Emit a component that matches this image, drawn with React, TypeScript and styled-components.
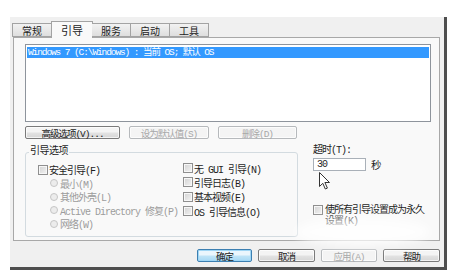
import styled, { createGlobalStyle } from "styled-components";

const GlobalStyle = createGlobalStyle`
  *, *::before, *::after { box-sizing: border-box; }
  html, body { margin: 0; padding: 0; background: #fff; }
  body {
    font-family: "Liberation Mono", "Noto Sans CJK SC", monospace;
    font-size: 10px;
    letter-spacing: -1px;
    color: #1e1e1e;
  }
`;

const Page = styled.div`
  width: 450px;
  height: 277px;
  padding: 17px 0 0 10px;
  overflow: hidden;
`;

const Window = styled.div`
  position: relative;
  width: 437px;
  height: 253px;
  display: flex;
  flex-direction: column;
  padding: 4px 4px 5px 3px;
  background: #f0f0f0;
  border-right: 3px solid #4e4e4e;
  border-bottom: 3px solid #4e4e4e;
`;

const TabRow = styled.div`
  display: flex;
  align-items: flex-end;
  height: 16px;
  margin-left: -1px;
  position: relative;
  z-index: 1;
`;

const Tab = styled.div<{ $active?: boolean }>`
  height: ${(p) => (p.$active ? "17px" : "14px")};
  padding: 0 9px;
  margin: ${(p) => (p.$active ? "0 -1px -1px" : "0")};
  display: flex;
  align-items: center;
  justify-content: center;
  border: 1px solid #a3a3a3;
  border-bottom: ${(p) => (p.$active ? "none" : "1px solid #a3a3a3")};
  border-left-width: ${(p) => (p.$active ? "1px" : "0")};
  background: ${(p) =>
    p.$active ? "#f9f9f9" : "linear-gradient(#f2f2f2, #dedede)"};
  font-size: ${(p) => (p.$active ? "11px" : "10px")};
  letter-spacing: 0;
  color: #222;
  &:first-child { border-left-width: 1px; }
`;

const Panel = styled.div`
  height: 204px;
  display: flex;
  flex-direction: column;
  padding: 6px 8px 0 11px;
  background: #f9f9f9;
  border: 1px solid #a8a8a8;
`;

const ListBox = styled.div`
  height: 78px;
  padding: 2px 1px;
  background: #fff;
  border: 1px solid #8e949c;
`;

const SelectedRow = styled.div`
  height: 11px;
  line-height: 11px;
  padding-left: 1px;
  background: #3399ff;
  color: #fff;
  font-size: 9.5px;
  letter-spacing: -1.1px;
  white-space: nowrap;
`;

const ButtonRow = styled.div<{ $end?: boolean }>`
  display: flex;
  gap: ${(p) => (p.$end ? "6px" : "9px")};
  justify-content: ${(p) => (p.$end ? "flex-end" : "flex-start")};
  margin-top: ${(p) => (p.$end ? "8px" : "4px")};
`;

const Button = styled.div<{ $w: number; $disabled?: boolean; $default?: boolean }>`
  width: ${(p) => p.$w}px;
  height: 13px;
  display: flex;
  align-items: center;
  justify-content: center;
  border-radius: 2px;
  font-size: 9.5px;
  white-space: nowrap;
  color: ${(p) => (p.$disabled ? "#a8a8a8" : "#222")};
  border: 1px solid
    ${(p) => (p.$default ? "#3c7fb1" : p.$disabled ? "#b6b9bc" : "#7a7a7a")};
  background: ${(p) =>
    p.$default
      ? "linear-gradient(#eaf6fd 45%, #bfe4f7 55%, #a7d9f5)"
      : p.$disabled
      ? "#f4f4f4"
      : "linear-gradient(#f4f4f4 45%, #e2e2e2 55%, #d6d6d6)"};
  box-shadow: inset 0 0 0 1px
    ${(p) => (p.$default ? "#9fd6f5" : "rgba(255,255,255,0.7)")};
`;

const Lower = styled.div`
  display: flex;
  margin-top: 7px;
`;

const Group = styled.fieldset`
  width: 273px;
  height: 91px;
  margin: 0;
  padding: 0;
  border: 1px solid #d3dbe0;
  border-radius: 3px;
  display: flex;
`;

const Legend = styled.legend`
  margin-left: 3px;
  padding: 0 1px;
  line-height: 12px;
  font-size: 10px;
  letter-spacing: -0.5px;
`;

const Column = styled.div<{ $w?: number; $top: number; $row: number }>`
  width: ${(p) => (p.$w ? `${p.$w}px` : "auto")};
  margin-left: ${(p) => (p.$w ? "12px" : "0")};
  padding-top: ${(p) => p.$top}px;
  display: flex;
  flex-direction: column;
  & > * { height: ${(p) => p.$row}px; }
`;

const Option = styled.div<{ $indent?: boolean; $disabled?: boolean }>`
  display: flex;
  align-items: center;
  margin-left: ${(p) => (p.$indent ? "12px" : "0")};
  color: ${(p) => (p.$disabled ? "#9c9c9c" : "#1e1e1e")};
  white-space: nowrap;
`;

const Check = styled.span`
  width: 10px;
  height: 10px;
  flex: none;
  margin-right: 1px;
  border: 1px solid #8f8f8f;
  background: linear-gradient(135deg, #d2d2d2, #f4f4f4);
  box-shadow: inset 0 0 0 1px #f7f7f7;
`;

const Radio = styled.span`
  width: 8px;
  height: 8px;
  flex: none;
  margin-right: 2px;
  border-radius: 50%;
  border: 1px solid #c6c6c6;
  background: #ececec;
`;

const Timeout = styled.div`
  position: relative;
  flex: 1;
  margin-left: 15px;
  margin-top: -1px;
  display: flex;
  flex-direction: column;
`;

const Label = styled.div`
  line-height: 12px;
`;

const InputRow = styled.div`
  display: flex;
  align-items: center;
`;

const Input = styled.div`
  width: 53px;
  height: 13px;
  padding-left: 3px;
  line-height: 11px;
  background: #fff;
  border: 1px solid #a9b0b8;
`;

const Unit = styled.span`
  margin-left: 5px;
  font-size: 10.5px;
`;

const Permanent = styled.div`
  display: flex;
  align-items: flex-start;
  margin-top: 33px;
`;

const PermText = styled.div`
  width: 106px;
  line-height: 11px;
  margin-left: 1px;
`;

const Cursor = styled.svg`
  position: absolute;
  left: 6px;
  top: 27px;
`;

const Smudge = styled.div`
  position: absolute;
  left: 285px;
  top: 200px;
  width: 135px;
  height: 30px;
  border-radius: 50%;
  background: rgba(255, 255, 255, 0.75);
  filter: blur(5px);
  pointer-events: none;
`;

const leftOptions = [
  { text: "最小(M)" },
  { text: "其他外壳(L)" },
  { text: "Active Directory 修复(P)" },
  { text: "网络(W)" },
];

const rightOptions = ["无 GUI 引导(N)", "引导日志(B)", "基本视频(E)", "OS 引导信息(O)"];

export default function App() {
  return (
    <Page>
      <GlobalStyle />
      <Window>
        <TabRow>
          <Tab>常规</Tab>
          <Tab $active>引导</Tab>
          <Tab>服务</Tab>
          <Tab>启动</Tab>
          <Tab>工具</Tab>
        </TabRow>
        <Panel>
          <ListBox>
            <SelectedRow>Windows 7 (C:\Windows) : 当前 OS; 默认 OS</SelectedRow>
          </ListBox>
          <ButtonRow>
            <Button $w={95}>高级选项(V)...</Button>
            <Button $w={80} $disabled>设为默认值(S)</Button>
            <Button $w={79} $disabled>删除(D)</Button>
          </ButtonRow>
          <Lower>
            <Group>
              <Legend>引导选项</Legend>
              <Column $w={145} $top={5} $row={13.5}>
                <Option>
                  <Check />
                  安全引导(F)
                </Option>
                {leftOptions.map((o) => (
                  <Option key={o.text} $indent $disabled>
                    <Radio />
                    {o.text}
                  </Option>
                ))}
              </Column>
              <Column $top={3} $row={14.3}>
                {rightOptions.map((t) => (
                  <Option key={t}>
                    <Check />
                    {t}
                  </Option>
                ))}
              </Column>
            </Group>
            <Timeout>
              <Label>超时(T):</Label>
              <InputRow>
                <Input>30</Input>
                <Unit>秒</Unit>
              </InputRow>
              <Cursor width="12" height="18" viewBox="0 0 12 18">
                <path
                  d="M0.5 0.5 L0.5 14.5 L3.8 11.3 L6.3 17 L8.4 16.1 L5.9 10.5 L10.5 10.5 Z"
                  fill="#fff"
                  stroke="#333"
                  strokeWidth="1"
                  strokeLinejoin="round"
                />
              </Cursor>
              <Permanent>
                <Check />
                <PermText>使所有引导设置成为永久设置(K)</PermText>
              </Permanent>
            </Timeout>
          </Lower>
        </Panel>
        <ButtonRow $end>
          <Button $w={55} $default>确定</Button>
          <Button $w={57}>取消</Button>
          <Button $w={56} $disabled>应用(A)</Button>
          <Button $w={57}>帮助</Button>
        </ButtonRow>
        <Smudge />
      </Window>
    </Page>
  );
}
